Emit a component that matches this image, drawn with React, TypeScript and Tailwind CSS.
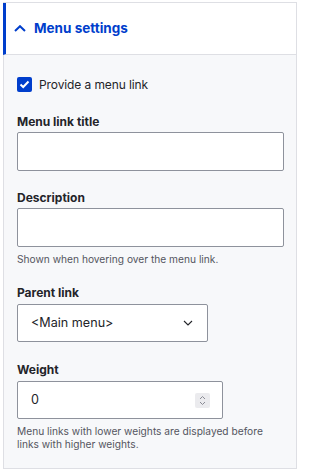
import React from 'react';

const font = { fontFamily: 'Inter, "Noto Sans", sans-serif' };

const Label = ({ children, className = '' }: { children: React.ReactNode; className?: string }) => (
  <div className={`text-[12px] leading-[16px] font-bold text-[#232429] mb-[2px] ${className}`}>{children}</div>
);

const App = () => {
  return (
    <div className="w-[300px] h-[476px] bg-white pt-[2px] pl-[3px] pr-[3px] overflow-hidden" style={font}>
      <div className="border-t border-r border-[#dedfe4]">
        {/* Summary header */}
        <div className="h-[52px] flex items-center border-l-[3px] border-[#003ecc] border-b border-b-[#dedfe4] bg-white pl-[8px]">
          <svg width="12" height="7" viewBox="0 0 12 7" className="mr-[8px]">
            <path d="M1 6 L6 1.2 L11 6" fill="none" stroke="#003ecc" strokeWidth="2" />
          </svg>
          <span className="text-[13.5px] font-bold text-[#003ecc]">Menu settings</span>
        </div>

        {/* Details body */}
        <div className="bg-[#f7f8fa] border-l border-b border-[#dedfe4] pl-[13px] pr-[12px] pt-[22px] pb-[17px]">
          <div className="flex items-center h-[15px]">
            <span className="w-[15px] h-[15px] rounded-[2px] bg-[#003ecc] flex items-center justify-center">
              <svg width="11" height="9" viewBox="0 0 11 9">
                <path d="M1.5 4.5 L4.2 7 L9.5 1.5" fill="none" stroke="#fff" strokeWidth="2" />
              </svg>
            </span>
            <span className="ml-[7px] text-[12px] tracking-[-0.1px] text-[#232429]">Provide a menu link</span>
          </div>

          <div className="mt-[22px]">
            <Label>Menu link title</Label>
            <div className="h-[39px] bg-white border border-[#8e929c] rounded-[2px]" />
          </div>

          <div className="mt-[19px]">
            <Label>Description</Label>
            <div className="h-[39px] bg-white border border-[#8e929c] rounded-[2px]" />
            <div className="mt-[5px] text-[10.2px] leading-[14px] text-[#545560]">Shown when hovering over the menu link.</div>
          </div>

          <div className="mt-[19px]">
            <Label className="mb-[3px]">Parent link</Label>
            <div className="w-[191px] h-[38px] bg-white border border-[#8e929c] rounded-[2px] flex items-center justify-between pl-[13px] pr-[14px]">
              <span className="text-[12.6px] text-[#232429]">&lt;Main menu&gt;</span>
              <svg width="10" height="6" viewBox="0 0 10 6">
                <path d="M1 1 L5 5 L9 1" fill="none" stroke="#232429" strokeWidth="1.1" />
              </svg>
            </div>
          </div>

          <div className="mt-[20px]">
            <Label className="mb-[3px]">Weight</Label>
            <div className="w-[206px] h-[38px] bg-white border border-[#8e929c] rounded-[2px] flex items-center justify-between pl-[13px] pr-[12px]">
              <span className="text-[12.6px] text-[#232429]">0</span>
              <span className="w-[15px] h-[15px] bg-[#ebebee] rounded-[2px] flex items-center justify-center">
                <svg width="7" height="11" viewBox="0 0 7 11">
                  <path d="M1 4 L3.5 1.5 L6 4 M1 7 L3.5 9.5 L6 7" fill="none" stroke="#8a8b94" strokeWidth="1" />
                </svg>
              </span>
            </div>
            <div className="mt-[6px] text-[10.2px] leading-[13px] text-[#545560]">
              Menu links with lower weights are displayed before links with higher weights.
            </div>
          </div>
        </div>
      </div>
    </div>
  );
};

export default App;
